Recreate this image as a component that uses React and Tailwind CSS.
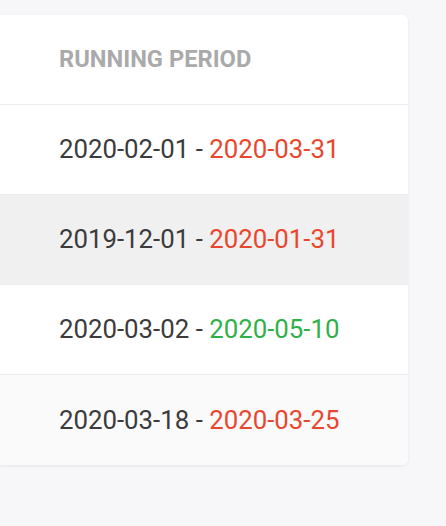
const rows = [
  { start: '2020-02-01', end: '2020-03-31', expired: true, bg: 'bg-white' },
  { start: '2019-12-01', end: '2020-01-31', expired: true, bg: 'bg-[#f0f0f0]' },
  { start: '2020-03-02', end: '2020-05-10', expired: false, bg: 'bg-white' },
  { start: '2020-03-18', end: '2020-03-25', expired: true, bg: 'bg-[#fafafa]' },
];

export default function App() {
  return (
    <div className="min-h-[526px] w-[446px] bg-[#f7f7f9] pt-[15px] font-['Roboto',sans-serif]">
      <div className="w-[408px] overflow-hidden rounded-r-[6px] bg-white shadow-[0_1px_3px_rgba(0,0,0,0.08)]">
        <div className="flex h-[90px] items-center border-b border-[#ececec] pl-[59px] text-[23.7px] font-bold text-[#aaaaaa]">
          RUNNING PERIOD
        </div>
        {rows.map((r, i) => (
          <div
            key={i}
            className={`flex h-[90px] items-center pl-[59px] text-[25.8px] text-[#3b3b3d] ${r.bg} ${
              i < rows.length - 1 ? 'border-b border-[#ececec]' : ''
            }`}
          >
            {r.start} -&nbsp;
            <span className={r.expired ? 'text-[#e8472f]' : 'text-[#2fb14a]'}>{r.end}</span>
          </div>
        ))}
      </div>
    </div>
  );
}
